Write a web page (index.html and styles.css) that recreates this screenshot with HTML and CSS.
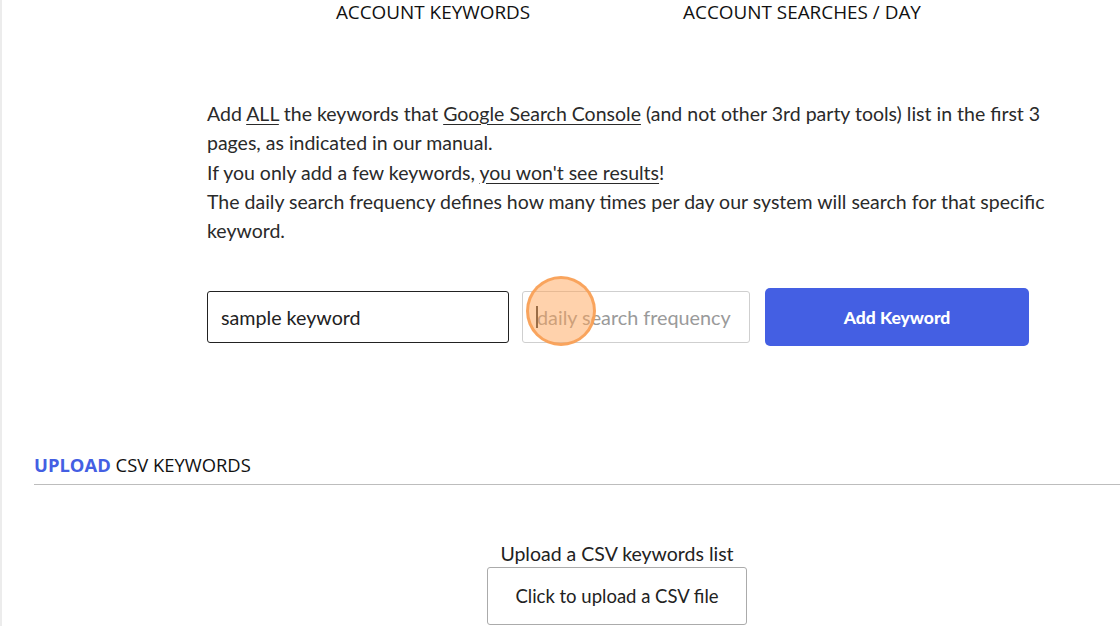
FILE: index.html
```html
<!DOCTYPE html>
<html lang="en">
<head>
<meta charset="utf-8">
<title>Keywords</title>
<link rel="stylesheet" href="styles.css">
</head>
<body>
<div class="page">
  <div class="table-head">
    <div class="th-spacer"></div>
    <div class="th">ACCOUNT KEYWORDS</div>
    <div class="th">ACCOUNT SEARCHES / DAY</div>
  </div>

  <div class="add-section">
    <p class="intro">Add <u>ALL</u> the keywords that <u>Google Search Console</u> (and not other 3rd party tools) list in the first 3 pages, as indicated in our manual.<br>If you only add a few keywords, <u>you won't see results</u>!<br>The daily search frequency defines how many times per day our system will search for that specific keyword.</p>

    <div class="form-row">
      <input class="kw-input" type="text" value="sample keyword">
      <div class="freq-wrap">
        <input class="freq-input" type="text" placeholder="daily search frequency">
        <span class="caret"></span>
        <span class="click-dot"></span>
      </div>
      <button class="add-btn" type="button">Add Keyword</button>
    </div>
  </div>

  <div class="upload-section">
    <h2 class="section-title"><span class="accent">UPLOAD</span> CSV KEYWORDS</h2>
    <div class="upload-box">
      <div class="upload-label">Upload a CSV keywords list</div>
      <button class="upload-btn" type="button">Click to upload a CSV file</button>
    </div>
  </div>
</div>
</body>
</html>
```

FILE: styles.css
```css
* { box-sizing: border-box; }
html, body { margin: 0; padding: 0; background: #fff; }
body {
  font-family: "Lato", "Open Sans", sans-serif;
  color: #222;
  overflow: hidden;
}
.page {
  border-left: 2px solid #ececec;
  min-height: 626px;
}
.table-head {
  display: grid;
  grid-template-columns: 246px 370px 368px;
  height: 25px;
  align-items: center;
}
.th {
  text-align: center;
  font-family: "Open Sans", sans-serif;
  font-size: 18.9px;
  color: #111;
  line-height: 25px;
}
.add-section {
  padding-left: 205px;
  padding-right: 50px;
}
.intro {
  margin: 74px 0 0 0;
  font-size: 19.5px;
  line-height: 29.3px;
  color: #2a2a2a;
}
.intro u { text-underline-offset: 3px; }
.form-row {
  display: flex;
  align-items: center;
  margin-top: 43px;
  gap: 13px;
}
.kw-input {
  width: 302px;
  height: 52px;
  border: 1.5px solid #222;
  border-radius: 3px;
  padding: 0 13px;
  font-family: inherit;
  font-size: 19.7px;
  color: #222;
  outline: none;
}
.freq-wrap {
  position: relative;
  width: 228px;
  height: 52px;
}
.freq-input {
  width: 100%;
  height: 100%;
  border: 1px solid #cfcfcf;
  border-radius: 3px;
  padding: 0 14px;
  font-family: inherit;
  font-size: 19.8px;
  outline: none;
}
.freq-input::placeholder { color: #9a9a9a; }
.caret {
  position: absolute;
  left: 14px;
  top: 15px;
  width: 1.5px;
  height: 22px;
  background: #333;
}
.click-dot {
  position: absolute;
  left: 4px;
  top: -15px;
  width: 70px;
  height: 70px;
  border-radius: 50%;
  background: rgba(255, 165, 90, 0.5);
  border: 3px solid rgba(248, 160, 85, 0.9);
}
.add-btn {
  margin-left: 2px;
  width: 264px;
  height: 58px;
  border: none;
  border-radius: 5px;
  background: #445fe3;
  color: #fff;
  font-family: inherit;
  font-weight: 900;
  font-size: 17.5px;
  cursor: pointer;
}
.upload-section {
  padding: 0 0 0 32px;
  margin-top: 106px;
}
.section-title {
  margin: 0;
  font-family: "Open Sans", sans-serif;
  font-weight: 400;
  font-size: 18.4px;
  line-height: 26px;
  color: #111;
  padding-bottom: 6px;
  border-bottom: 1px solid #bdbdbd;
}
.accent { color: #445fe3; font-weight: 700; }
.upload-box {
  display: flex;
  flex-direction: column;
  align-items: center;
  margin-top: 56px;
  padding-left: 80px;
}
.upload-label {
  font-size: 19.5px;
  line-height: 26px;
  color: #222;
}
.upload-btn {
  margin-top: 0;
  width: 260px;
  height: 58px;
  border: 1px solid #ababab;
  border-radius: 3px;
  background: #fff;
  font-family: inherit;
  font-size: 18.5px;
  color: #222;
}
```
